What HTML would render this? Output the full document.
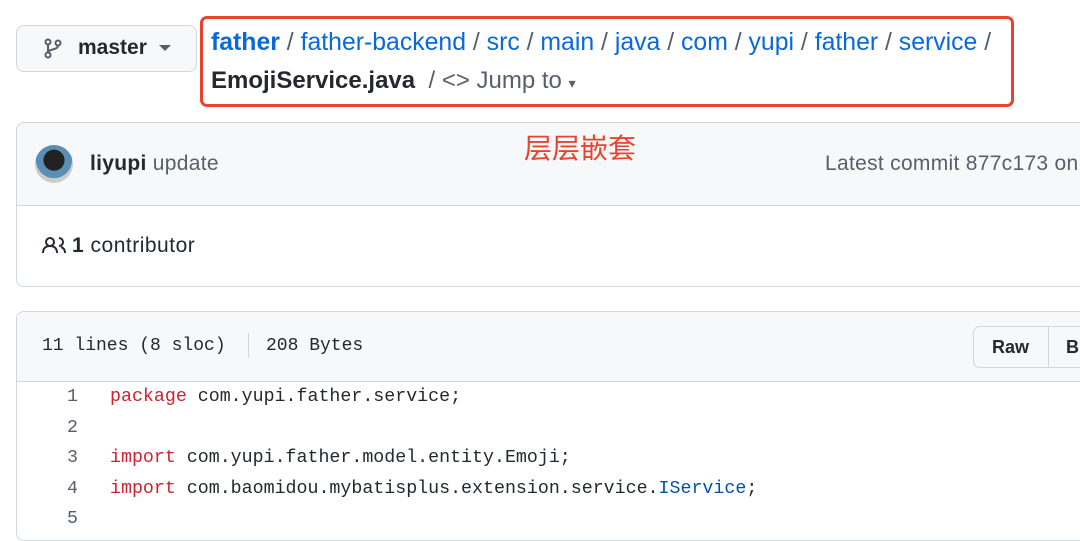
<!DOCTYPE html>
<html><head><meta charset="utf-8"><style>
*{box-sizing:border-box;margin:0;padding:0}
body{width:1080px;height:523px;overflow:hidden;background:#fff;font-family:"Liberation Sans","Noto Sans CJK SC",sans-serif;color:#24292f;position:relative}
.abs{position:absolute}
.btn{left:16px;top:25px;width:181px;height:47px;border:1px solid #d0d7de;border-radius:8px;background:#f6f8fa}
.red{left:200px;top:16px;width:814px;height:91px;border:3px solid #e8432f;border-radius:7px}
.bc{left:211px;font-size:24.8px;white-space:nowrap;color:#57606a}
.bc a{color:#0969da;text-decoration:none}
.box{left:16px;top:122px;width:1100px;height:165px;border:1px solid #d0d7de;border-radius:8px;overflow:hidden}
.mono{font-family:"Liberation Mono",monospace}
.code div{position:absolute;font-size:18.3px;white-space:pre;line-height:22px}
.kw{color:#cf222e}
</style></head><body>
<div class="abs btn"></div>
<svg class="abs" style="left:44px;top:38px" width="18" height="21" viewBox="0 0 18 21" fill="none" stroke="#57606a" stroke-width="2"><circle cx="4" cy="4" r="2.5"/><circle cx="4" cy="17" r="2.5"/><circle cx="14" cy="5" r="2.5"/><path d="M4 6.5v8M14 7.5c0 5-10 3-10 7"/></svg>
<div class="abs" style="left:78px;top:36px;font-size:21px;font-weight:600">master</div>
<svg class="abs" style="left:159px;top:45px" width="12" height="7"><path d="M0 0h12L6 6z" fill="#57606a"/></svg>
<div class="abs red"></div>
<div class="abs bc" style="top:29px"><a style="font-weight:700">father</a> / <a>father-backend</a> / <a>src</a> / <a>main</a> / <a>java</a> / <a>com</a> / <a>yupi</a> / <a>father</a> / <a>service</a> /</div>
<div class="abs bc" style="top:67px;font-size:24px"><b style="color:#24292f">EmojiService.java</b> &nbsp;/ &lt;&gt; Jump to <span style="font-size:14px">▾</span></div>
<div class="abs box"><div style="height:83px;background:#f6f8fa;border-bottom:1px solid #d0d7de"></div></div>
<div class="abs" style="left:35px;top:145px;width:38px;height:38px;border-radius:50%;background:radial-gradient(circle at 50% 40%,#222 0 35%,#5a8fb5 36% 60%,#ccc 61%)"></div>
<div class="abs" style="left:90px;top:152px;font-size:21px;letter-spacing:0.3px"><b>liyupi</b> <span style="color:#57606a">update</span></div>
<div class="abs" style="left:524px;top:127px;font-size:28px;color:#e8432f">层层嵌套</div>
<div class="abs" style="left:825px;top:152px;font-size:21px;letter-spacing:0.3px;color:#57606a;white-space:nowrap">Latest commit 877c173 on</div>
<svg class="abs" style="left:42px;top:236px" width="26" height="18" fill="none" stroke="#24292f" stroke-width="2"><circle cx="8" cy="6" r="4"/><path d="M1 17c0-5 3-7 7-7s7 2 7 7M17 2a4 4 0 010 8M19 11c3 1 4 3 4 6"/></svg>
<div class="abs" style="left:72px;top:234px;font-size:21px;letter-spacing:0.5px"><b>1</b> contributor</div>
<div class="abs" style="left:16px;top:311px;width:1100px;height:230px;border:1px solid #d0d7de;border-radius:8px;overflow:hidden"><div style="height:70px;background:#f6f8fa;border-bottom:1px solid #d0d7de"></div></div>
<div class="abs mono" style="left:42px;top:336px;font-size:18px;white-space:pre">11 lines (8 sloc)</div>
<div class="abs" style="left:248px;top:333px;width:1px;height:25px;background:#d0d7de"></div>
<div class="abs mono" style="left:266px;top:336px;font-size:18px">208 Bytes</div>
<div class="abs" style="left:973px;top:326px;width:140px;height:42px;border:1px solid #d0d7de;border-radius:7px;background:#f6f8fa"></div>
<div class="abs" style="left:1048px;top:327px;width:1px;height:40px;background:#d0d7de"></div>
<div class="abs" style="left:992px;top:337px;font-size:18px;font-weight:600">Raw</div>
<div class="abs" style="left:1066px;top:337px;font-size:18px;font-weight:600">Bl</div>
<div class="code mono" style="color:#57606a">
<div style="left:67px;top:386px">1</div><div style="left:67px;top:417px">2</div><div style="left:67px;top:447px">3</div><div style="left:67px;top:478px">4</div><div style="left:67px;top:508px">5</div>
</div>
<div class="code mono" style="color:#24292f">
<div style="left:110px;top:386px"><span class="kw">package</span> com.yupi.father.service;</div>
<div style="left:110px;top:447px"><span class="kw">import</span> com.yupi.father.model.entity.Emoji;</div>
<div style="left:110px;top:478px"><span class="kw">import</span> com.baomidou.mybatisplus.extension.service.<span style="color:#0550ae">IService</span>;</div>
</div>
</body></html>
